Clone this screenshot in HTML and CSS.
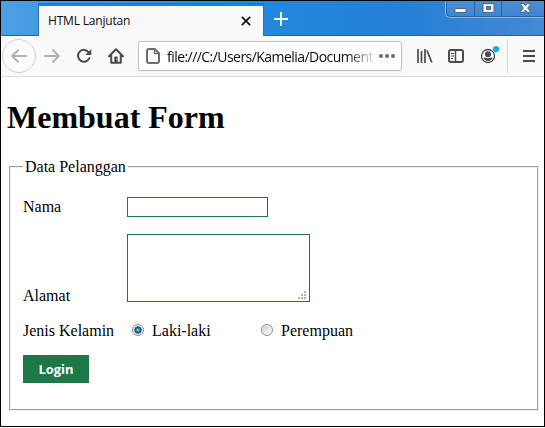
FILE: index.html
```html
<!DOCTYPE html>
<html lang="id">
<head>
<meta charset="utf-8">
<title>HTML Lanjutan</title>
<link rel="stylesheet" href="styles.css">
</head>
<body>
<div class="window">
  <header class="tabstrip">
    <div class="tab">
      <span class="tab-title">HTML Lanjutan</span>
      <svg class="tab-close" width="10" height="10" viewBox="0 0 10 10"><path d="M.8.8l8.4 8.4M9.2.8L.8 9.2" stroke="#111" stroke-width="1.7" fill="none"/></svg>
    </div>
    <svg class="new-tab" width="14" height="14" viewBox="0 0 14 14"><path d="M7 0v14M0 7h14" stroke="#fff" stroke-width="1.8"/></svg>
    <div class="window-controls">
      <span class="control"><svg width="13" height="12" viewBox="0 0 13 12"><rect x="1" y="6.5" width="11" height="4" rx=".5" fill="#f5f5f5" stroke="#53657f"/></svg></span>
      <span class="control"><svg width="13" height="12" viewBox="0 0 13 12"><path d="M1 1.500h11v9H1zM4.500 4.500v3h4v-3z" fill="#f5f5f5" stroke="#53657f" fill-rule="evenodd"/></svg></span>
      <span class="control control-close"><svg width="13" height="12" viewBox="0 0 13 12"><path d="M1 1.500h3.500l2 2.300 2-2.300H12L8.700 6l3.300 4.500H8.500l-2-2.500-2 2.500H1L4.300 6z" fill="#f5f5f5" stroke="#53657f"/></svg></span>
    </div>
  </header>
  <nav class="toolbar">
    <span class="back"><svg width="16" height="14" viewBox="0 0 16 14"><path d="M15 7H1.500M7 1.200L1.300 7 7 12.800" class="arrow"/></svg></span>
    <svg class="forward" width="16" height="14" viewBox="0 0 16 14"><path d="M1 7h13.500M9 1.200L14.700 7 9 12.800" class="arrow"/></svg>
    <svg class="reload" width="16" height="16" viewBox="0 0 16 16"><path d="M13.300 10.200A5.900 5.900 0 1 1 12.700 4.300" fill="none" stroke="#4a4a4f" stroke-width="2" stroke-linecap="round"/><path d="M15.300 1v6H9.300z" fill="#4a4a4f"/></svg>
    <svg class="home" width="16" height="16" viewBox="0 0 16 16"><path d="M1 8.200L8 1.300l7 6.900M3.200 7.500v7.300h9.600V7.500" fill="none" stroke="#4a4a4f" stroke-width="2" stroke-linecap="round" stroke-linejoin="round"/><path d="M6.300 14V9.500q0-1 1-1h1.400q1 0 1 1V14z" fill="#4a4a4f"/><path d="M8.300 10.800h.9v1h-.9z" fill="#ddd"/></svg>
    <div class="urlbar">
      <svg class="page-icon" width="14" height="16" viewBox="0 0 14 16"><path d="M3 1h5.700L13 5.200V13q0 2-2 2H3q-2 0-2-2V3q0-2 2-2z" fill="none" stroke="#6b6b6e" stroke-width="2"/><path d="M8.500 1v4.500H13" fill="none" stroke="#6b6b6e" stroke-width="1.300"/></svg>
      <span class="url">file:///C:/Users/Kamelia/Document</span>
      <svg class="dots" width="16" height="4" viewBox="0 0 16 4"><g fill="#69696c"><circle cx="2" cy="2" r="2"/><circle cx="8" cy="2" r="2"/><circle cx="14" cy="2" r="2"/></g></svg>
    </div>
    <svg class="library" width="16" height="14" viewBox="0 0 16 14"><path d="M1 0v14M4.500 2v12M8 0v14M10 1.500L14.800 13.500" fill="none" stroke="#4a4a4f" stroke-width="1.700"/></svg>
    <svg class="sidebar" width="16" height="14" viewBox="0 0 16 14"><rect x="1" y="1" width="14" height="12" rx="2" fill="none" stroke="#4a4a4f" stroke-width="2"/><path d="M7.500 1v12" stroke="#4a4a4f" stroke-width="1.500"/><path d="M3 4.500h3M3 7h3M3 9.500h2" stroke="#4a4a4f" stroke-width="1"/></svg>
    <svg class="account" width="20" height="20" viewBox="0 0 20 20"><circle cx="8" cy="11" r="6.500" fill="none" stroke="#4a4a4f" stroke-width="1.300"/><circle cx="8" cy="9.200" r="3" fill="#4a4a4f"/><path d="M3.500 12.700q2 .2 2.800 0 1.700 1 3.400 0 .8.200 2.800 0Q11.300 16 8 16t-4.500-3.300z" fill="#4a4a4f"/><circle cx="16" cy="4" r="3.100" fill="#00b3f4"/></svg>
    <span class="divider"></span>
    <svg class="menu" width="12" height="12" viewBox="0 0 12 12"><path d="M0 1h12M0 6h12M0 11h12" stroke="#4a4a4f" stroke-width="2"/></svg>
  </nav>
  <main class="page">
    <h1>Membuat Form</h1>
    <form>
      <fieldset>
        <legend>Data Pelanggan</legend>
        <div class="row row-name"><label for="nama">Nama</label><input id="nama" class="field" type="text"></div>
        <div class="row row-address"><label for="alamat">Alamat</label><div class="area-wrap"><textarea id="alamat" class="field area"></textarea><svg class="grip" width="9" height="9" viewBox="0 0 9 9"><path d="M7 1h2M4 4h2M7 4h2M1 7h2M4 7h2M7 7h2" stroke="#b4b4b4" stroke-width="2"/></svg></div></div>
        <div class="row row-gender">
          <span class="caption">Jenis Kelamin</span>
          <label class="choice"><input type="radio" name="jk" checked>Laki-laki</label>
          <label class="choice"><input type="radio" name="jk">Perempuan</label>
        </div>
        <button type="button" class="login">Login</button>
      </fieldset>
    </form>
  </main>
</div>
</body>
</html>
```
FILE: styles.css
```css
* { box-sizing: border-box; }
body { margin: 0; background: #fff; overflow: hidden; }
svg { display: block; flex: none; }
.window { width: 545px; height: 427px; border: 1px solid #000; background: #fff; }

.tabstrip {
  height: 35px;
  display: flex;
  align-items: flex-start;
  padding-left: 37px;
  background: linear-gradient(90deg, #4ba0e4 0, #479be0 38px, #2388dc 262px, #2380d6 400px, #4589d3 100%);
  border-bottom: 1px solid #1c65ad;
}
.tab {
  width: 226px;
  height: 33px;
  margin-top: 2px;
  display: flex;
  align-items: center;
  justify-content: space-between;
  padding: 1px 12px 0 9px;
  background: #f9f9fa;
  background-clip: padding-box;
  border: 1px solid #2772b8;
  border-bottom: 0;
  box-shadow: inset 0 2px #0a84ff;
}
.tab-title { font: 12px/16px "Open Sans", "Noto Sans", sans-serif; letter-spacing: -.18px; color: #0c0c0d; }
.new-tab { margin: 11px 0 0 10px; }
.window-controls {
  display: flex;
  width: 99px;
  height: 17px;
  margin-left: auto;
  border: 1px solid #83b9ec;
  border-top: 0;
  border-right: 0;
  border-bottom-left-radius: 5px;
  background: linear-gradient(#4b8ed2, #3d87d2);
  box-shadow: inset 1px -1px #2f639e;
}
.control { width: 29px; height: 16px; display: flex; justify-content: center; padding-top: 1px; border-right: 1px solid #2f639e; }
.control:nth-child(2) { width: 27px; }
.control-close { width: 42px; border-right: 0; padding-left: 4px; }

.toolbar { height: 41px; display: flex; align-items: center; background: #f9f9fa; border-bottom: 1px solid #dcdcdc; }
.arrow { fill: none; stroke: #b1b1b1; stroke-width: 2; stroke-linecap: round; stroke-linejoin: round; }
.back { flex: none; width: 34px; height: 34px; margin-left: 1px; border: 1px solid #d3d3d3; border-radius: 50%; display: grid; place-items: center; background: #fcfcfc; }
.forward { margin-left: 8px; }
.reload { margin-left: 16px; }
.home { margin-left: 16px; }
.urlbar { flex: none; display: flex; align-items: center; width: 264px; height: 30px; margin-left: 14px; padding: 0 5px 0 7px; background: #fff; border: 1px solid #c2c2c3; border-radius: 2px; box-shadow: 0 1px 3px #0000000d; }
.url {
  width: 209px;
  margin: 1px 3px 0 7px;
  white-space: nowrap;
  font: 14px/20px "Open Sans", "Noto Sans", sans-serif;
  letter-spacing: -.55px;
  color: #0c0c0d;
  -webkit-mask-image: linear-gradient(90deg, #000 180px, transparent 210px);
  mask-image: linear-gradient(90deg, #000 180px, transparent 210px);
}
.library { margin-left: 15px; }
.sidebar { margin-left: 15px; }
.account { margin: -2px 0 0 16px; }
.divider { width: 1px; height: 34px; margin-left: 7px; background: #d9d9da; }
.menu { margin-left: 15px; }

.page { padding: 22px 6px 0; font: 16px/18px "Liberation Serif", serif; color: #000; }
h1 { margin: 0; font-size: 32px; line-height: 37px; }
form { padding: 22px 0 0 2px; }
fieldset { width: 530px; height: 253px; margin: 0; padding: 0 12px; border: 2px groove #f0f0f0; }
legend { padding: 0 2px; }
.row { display: flex; }
.row > label, .caption { width: 104px; }
.row-name { margin-top: 21px; height: 20px; }
.row-name label { padding-top: 1px; }
.field { display: block; width: 141px; height: 20px; margin: 0; border: 1px solid #1c7947; background: #fff; outline: 0; }
.row-address { margin-top: 17px; align-items: flex-end; }
.row-address label { margin-bottom: -3px; }
.area-wrap { position: relative; }
.area { width: 183px; height: 68px; resize: none; }
.grip { position: absolute; right: 4px; bottom: 2px; }
.row-gender { margin-top: 20px; height: 18px; }
.row-gender .choice { display: flex; width: 129px; padding-left: 5px; }
.choice input {
  appearance: none;
  flex: none;
  width: 12px;
  height: 12px;
  margin: 2px 8px 0 0;
  border: 1px solid #8e8f8f;
  border-radius: 50%;
  background: linear-gradient(135deg, #c5c8cb, #f4f4f4 75%);
  box-shadow: inset 0 0 0 1px #f1f1f1;
}
.choice input:checked { background: radial-gradient(circle at 5px 5px, #a8e6f8 0, #2692bd 1.5px, #0c3f62 3.3px, transparent 4px), #e5e5e5; }
.login { display: block; width: 66px; height: 28px; margin-top: 15px; padding: 0; border: 0; background: #1c7947; color: #fff; font: bold 13px/20px "Open Sans", "Noto Sans", sans-serif; }
```
